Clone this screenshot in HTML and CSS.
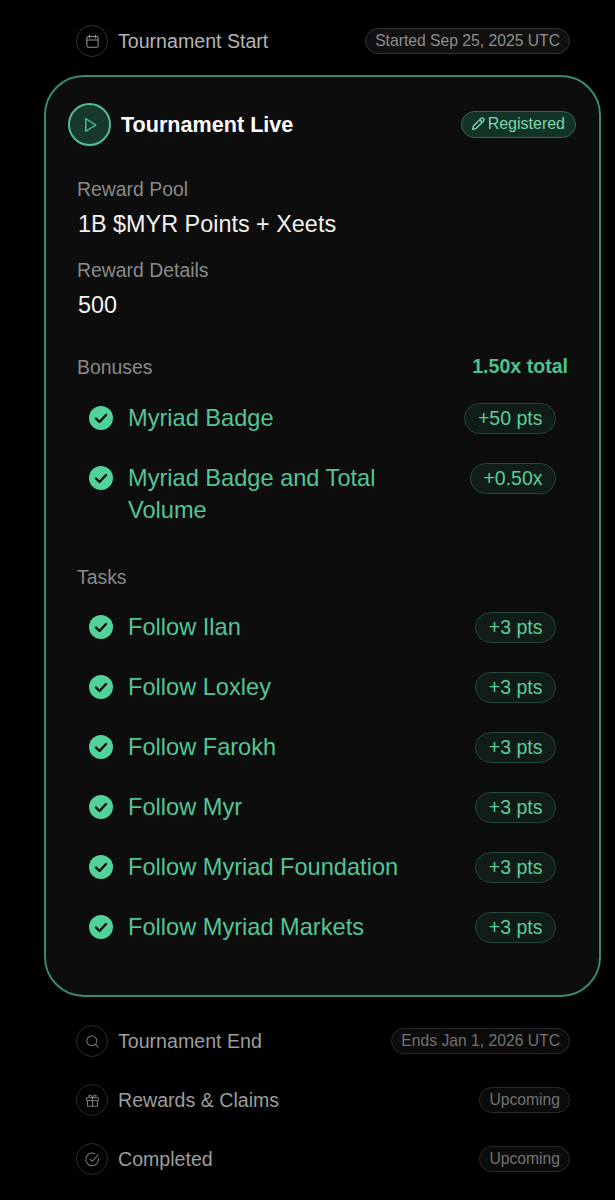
FILE: index.html
```html
<!DOCTYPE html>
<html lang="en">
<head>
    <meta charset="UTF-8">
    <meta name="viewport" content="width=device-width, initial-scale=1.0">
    <title>Tournament</title>
    <link rel="stylesheet" href="styles.css">
</head>
<body>
    <div class="timeline">
        <div class="step step-first">
            <span class="step-icon">
                <svg viewBox="0 0 24 24"><rect x="4" y="5" width="16" height="15" rx="2.5"/><path d="M8 3v4M16 3v4M4 10h16"/></svg>
            </span>
            <span class="step-name">Tournament Start</span>
            <span class="pill">Started Sep 25, 2025 UTC</span>
        </div>

        <div class="card">
            <div class="card-head">
                <span class="live-icon">
                    <svg viewBox="0 0 24 24"><path d="M7 4.500v15l12-7.500z"/></svg>
                </span>
                <h1>Tournament Live</h1>
                <span class="registered">
                    <svg viewBox="0 0 24 24"><path d="M4 20l1.200-5L16.500 3.700a2.400 2.400 0 0 1 3.800 3.800L9 18.800z"/><path d="M14.500 5.700l3.800 3.800"/></svg>
                    Registered
                </span>
            </div>

            <div class="label label-first">Reward Pool</div>
            <div class="value">1B $MYR Points + Xeets</div>
            <div class="label label-second">Reward Details</div>
            <div class="value">500</div>

            <div class="section-head">
                <span class="label">Bonuses</span>
                <span class="total">1.50x total</span>
            </div>
            <div class="bonus">
                <svg class="check" viewBox="0 0 24 24"><circle cx="12" cy="12" r="12"/><path d="M7 12.500l3.500 3.500 6.500-7"/></svg>
                <span class="task-name">Myriad Badge</span>
                <span class="points">+50 pts</span>
            </div>
            <div class="bonus">
                <svg class="check" viewBox="0 0 24 24"><circle cx="12" cy="12" r="12"/><path d="M7 12.500l3.500 3.500 6.500-7"/></svg>
                <span class="task-name task-wrap">Myriad Badge and Total Volume</span>
                <span class="points">+0.50x</span>
            </div>

            <div class="label label-tasks">Tasks</div>
            <div class="task">
                <svg class="check" viewBox="0 0 24 24"><circle cx="12" cy="12" r="12"/><path d="M7 12.500l3.500 3.500 6.500-7"/></svg>
                <span class="task-name">Follow Ilan</span>
                <span class="points">+3 pts</span>
            </div>
            <div class="task">
                <svg class="check" viewBox="0 0 24 24"><circle cx="12" cy="12" r="12"/><path d="M7 12.500l3.500 3.500 6.500-7"/></svg>
                <span class="task-name">Follow Loxley</span>
                <span class="points">+3 pts</span>
            </div>
            <div class="task">
                <svg class="check" viewBox="0 0 24 24"><circle cx="12" cy="12" r="12"/><path d="M7 12.500l3.500 3.500 6.500-7"/></svg>
                <span class="task-name">Follow Farokh</span>
                <span class="points">+3 pts</span>
            </div>
            <div class="task">
                <svg class="check" viewBox="0 0 24 24"><circle cx="12" cy="12" r="12"/><path d="M7 12.500l3.500 3.500 6.500-7"/></svg>
                <span class="task-name">Follow Myr</span>
                <span class="points">+3 pts</span>
            </div>
            <div class="task">
                <svg class="check" viewBox="0 0 24 24"><circle cx="12" cy="12" r="12"/><path d="M7 12.500l3.500 3.500 6.500-7"/></svg>
                <span class="task-name">Follow Myriad Foundation</span>
                <span class="points">+3 pts</span>
            </div>
            <div class="task">
                <svg class="check" viewBox="0 0 24 24"><circle cx="12" cy="12" r="12"/><path d="M7 12.500l3.500 3.500 6.500-7"/></svg>
                <span class="task-name">Follow Myriad Markets</span>
                <span class="points">+3 pts</span>
            </div>
        </div>

        <div class="step step-after dim">
            <span class="step-icon">
                <svg viewBox="0 0 24 24"><circle cx="11" cy="11" r="7"/><path d="M16.500 16.500L20 20"/></svg>
            </span>
            <span class="step-name">Tournament End</span>
            <span class="pill">Ends Jan 1, 2026 UTC</span>
        </div>
        <div class="step dim">
            <span class="step-icon">
                <svg viewBox="0 0 24 24"><rect x="3.500" y="8" width="17" height="4" rx="1"/><path d="M5 12v8h14v-8M12 8v12M12 8C10 3 6 3.500 7 6.500 7.500 8 12 8 12 8zM12 8c2-5 6-4.500 5-1.500C16.500 8 12 8 12 8z"/></svg>
            </span>
            <span class="step-name">Rewards &amp; Claims</span>
            <span class="pill">Upcoming</span>
        </div>
        <div class="step dim">
            <span class="step-icon">
                <svg viewBox="0 0 24 24"><path d="M20.500 10.500A9 9 0 1 1 15.500 3.700"/><path d="M8.500 11.500l3 3L20 5.500"/></svg>
            </span>
            <span class="step-name">Completed</span>
            <span class="pill">Upcoming</span>
        </div>
    </div>
</body>
</html>
```

FILE: styles.css
```css
/* Base */
body {
    margin: 0;
    background: #000;
    font-family: 'Liberation Sans', Arial, sans-serif;
    color: #fff;
}

.timeline {
    padding: 25px 14px 0 44px;
    height: 1175px;
    overflow: hidden;
}

/* Timeline rows outside the card */
.step {
    display: flex;
    align-items: center;
    height: 32px;
    padding: 0 31px 0 32px;
    margin-bottom: 27px;
}

.step-first {
    margin-bottom: 18px;
}

.step-after {
    margin-top: 28px;
}

.step-icon {
    width: 30px;
    height: 30px;
    flex: none;
    display: flex;
    align-items: center;
    justify-content: center;
    border: 1px solid #333;
    border-radius: 50%;
    margin-right: 10px;
}

.step-icon svg {
    width: 17px;
    height: 17px;
    fill: none;
    stroke: #8f8f8f;
    stroke-width: 1.5;
    stroke-linecap: round;
    stroke-linejoin: round;
}

.step-name {
    flex: 1;
    font-size: 19.6px;
    color: #b5b5b5;
}

.pill {
    height: 24px;
    line-height: 24px;
    padding: 0 9px;
    border: 1px solid #333;
    border-radius: 14px;
    background: #111;
    font-size: 15.7px;
    color: #8e8e8e;
}

.dim .step-name {
    color: #9d9d9d;
}

.dim .pill {
    color: #737373;
    background: #0b0b0b;
    border-color: #2a2a2a;
}

.dim .step-icon {
    border-color: #2c2c2c;
}

.dim .step-icon svg {
    stroke: #777;
}

/* Active card */
.card {
    height: 918px;
    border: 2px solid #3a8a68;
    border-radius: 40px;
    background: #0d0d0d;
}

.card-head {
    display: flex;
    align-items: center;
    padding: 26px 23px 0 22px;
}

.live-icon {
    width: 39px;
    height: 39px;
    flex: none;
    display: flex;
    align-items: center;
    justify-content: center;
    border: 2px solid #4fbf8f;
    border-radius: 50%;
    background: #17392c;
}

.live-icon svg {
    width: 20px;
    height: 20px;
    fill: none;
    stroke: #50c493;
    stroke-width: 1.7;
    stroke-linejoin: round;
}

h1 {
    flex: 1;
    margin: 0 0 0 10px;
    font-size: 21.6px;
    font-weight: bold;
    color: #fff;
}

.registered {
    display: flex;
    align-items: center;
    gap: 2px;
    height: 25px;
    margin-top: -1px;
    padding: 0 10px 0 8px;
    border: 1px solid #2c6a50;
    border-radius: 14px;
    background: #143327;
    font-size: 16px;
    color: #79d9ae;
}

.registered svg {
    width: 16px;
    height: 16px;
    fill: none;
    stroke: #79d9ae;
    stroke-width: 2;
    stroke-linejoin: round;
}

.label {
    font-size: 19.4px;
    line-height: 22px;
    color: #8a8a8a;
}

.label-first,
.label-second,
.label-tasks {
    margin-left: 31px;
}

.label-first {
    margin-top: 32px;
}

.label-second {
    margin-top: 20px;
}

.value {
    margin-top: 9px;
    margin-left: 32px;
    font-size: 23.4px;
    line-height: 30px;
    color: #f2f2f2;
}

.section-head {
    display: flex;
    justify-content: space-between;
    align-items: center;
    margin: 35px 31px 0 31px;
}

.total {
    font-size: 19.6px;
    font-weight: bold;
    color: #4ec28f;
}

.bonus,
.task {
    display: flex;
    align-items: flex-start;
    padding: 0 43px;
}

.bonus {
    margin-top: 25px;
}

.bonus + .bonus {
    margin-top: 29px;
}

.task {
    height: 32px;
    margin-top: 28px;
}

.label-tasks {
    margin-top: 40px;
    margin-bottom: -4px;
}

.check {
    width: 24px;
    height: 24px;
    flex: none;
    margin: 3px 15px 0 0;
}

.check circle {
    fill: #52d29b;
}

.check path {
    fill: none;
    stroke: #0d0d0d;
    stroke-width: 2.4;
    stroke-linecap: round;
    stroke-linejoin: round;
}

.task-name {
    flex: 1;
    margin-top: -1px;
    font-size: 23.6px;
    line-height: 32px;
    color: #55c496;
}

.task-wrap {
    max-width: 280px;
}

.points {
    margin-left: auto;
    height: 29px;
    line-height: 29px;
    padding: 0 12.5px;
    border: 1px solid #24483a;
    border-radius: 16px;
    background: #101c17;
    font-size: 19.5px;
    color: #5ecb9b;
}
```
